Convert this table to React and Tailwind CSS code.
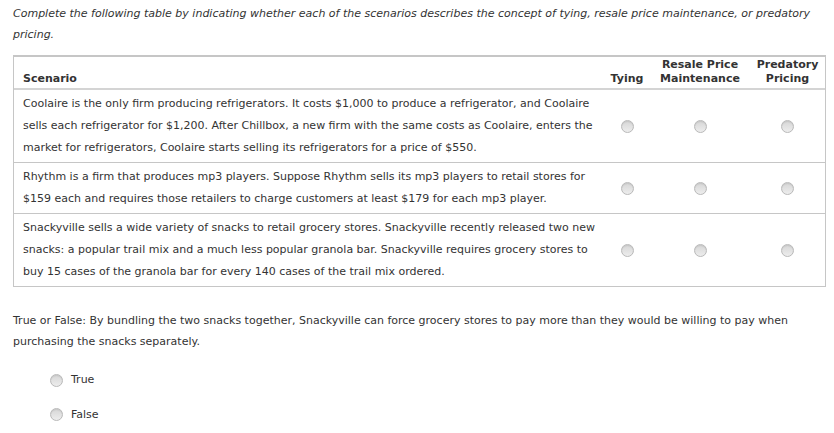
import React from "react";

const rows = [
  "Coolaire is the only firm producing refrigerators. It costs $1,000 to produce a refrigerator, and Coolaire sells each refrigerator for $1,200. After Chillbox, a new firm with the same costs as Coolaire, enters the market for refrigerators, Coolaire starts selling its refrigerators for a price of $550.",
  "Rhythm is a firm that produces mp3 players. Suppose Rhythm sells its mp3 players to retail stores for $159 each and requires those retailers to charge customers at least $179 for each mp3 player.",
  "Snackyville sells a wide variety of snacks to retail grocery stores. Snackyville recently released two new snacks: a popular trail mix and a much less popular granola bar. Snackyville requires grocery stores to buy 15 cases of the granola bar for every 140 cases of the trail mix ordered.",
];

function Radio() {
  return (
    <span className="inline-block w-[13px] h-[13px] rounded-full border border-[#b9b9b9] bg-gradient-to-b from-[#d6d6d6] to-[#ededed] shadow-[inset_0_1px_1px_rgba(0,0,0,0.08)]" />
  );
}

export default function App() {
  return (
    <div className="bg-white text-[#333] text-[11px] font-['DejaVu_Sans',Verdana,sans-serif] px-[13px] pt-[3px] w-[834px] h-[433px] overflow-hidden">
      <p className="italic leading-[21px]">
        Complete the following table by indicating whether each of the scenarios describes the concept of tying, resale price maintenance, or predatory pricing.
      </p>

      <div className="mt-[10px] w-[813px] border border-[#c6c6c6] border-t-2">
        <div className="grid grid-cols-[590px_46px_100px_1fr] items-end font-bold leading-[14px] pt-[1px] pb-[2px] border-b-2 border-[#d4d4d4]">
          <div className="pl-[9px]">Scenario</div>
          <div className="text-center">Tying</div>
          <div className="text-center">
            Resale Price
            <br />
            Maintenance
          </div>
          <div className="text-center">
            Predatory
            <br />
            Pricing
          </div>
        </div>
        {rows.map((text, i) => (
          <div
            key={i}
            className={`grid grid-cols-[590px_46px_100px_1fr] items-center ${
              i < rows.length - 1 ? "border-b border-[#c6c6c6]" : ""
            }`}
          >
            <div className="pl-[9px] pr-[6px] py-[3px] leading-[22px]">{text}</div>
            <div className="flex justify-center">
              <Radio />
            </div>
            <div className="flex justify-center">
              <Radio />
            </div>
            <div className="flex justify-center">
              <Radio />
            </div>
          </div>
        ))}
      </div>

      <p className="mt-[23px] leading-[21px]">
        True or False: By bundling the two snacks together, Snackyville can force grocery stores to pay more than they would be willing to pay when purchasing the snacks separately.
      </p>

      <div className="mt-[20px] pl-[37px] flex flex-col gap-[18px]">
        <label className="flex items-center gap-[8px]">
          <Radio />
          <span>True</span>
        </label>
        <label className="flex items-center gap-[8px]">
          <Radio />
          <span>False</span>
        </label>
      </div>
    </div>
  );
}
